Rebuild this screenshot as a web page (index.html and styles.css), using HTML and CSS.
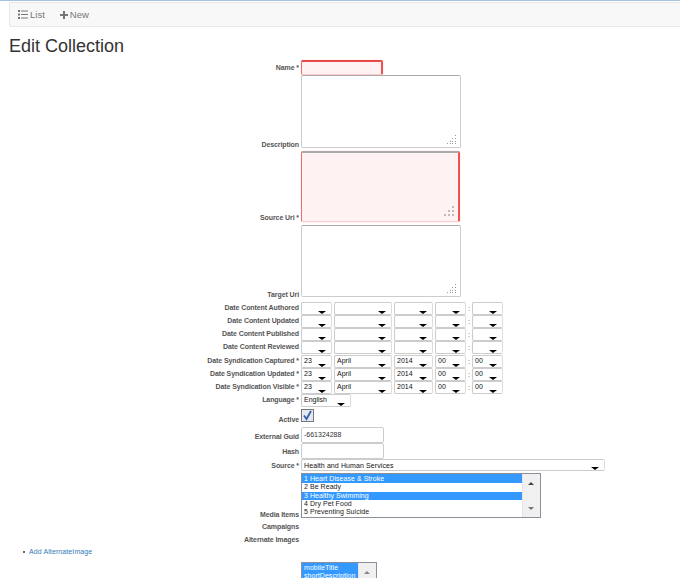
FILE: index.html
```html
<!DOCTYPE html>
<html lang="en">
<head>
    <meta charset="UTF-8">
    <title>Edit Collection</title>
    <link rel="stylesheet" href="styles.css">
</head>
<body>
    <nav class="navbar">
        <a class="nav-link">
            <svg class="nav-icon" width="10" height="9" viewBox="0 0 10 9"><path d="M0 0h2v2H0zM0 3.500h2v2H0zM0 7h2v2H0zM3 .5h7v1H3zM3 4h7v1H3zM3 7.500h7v1H3z" fill="#777"/></svg>
            List
        </a>
        <a class="nav-link">
            <svg class="nav-icon" width="8" height="8" viewBox="0 0 8 8"><path d="M3 0h2v3h3v2H5v3H3V5H0V3h3z" fill="#777"/></svg>
            New
        </a>
    </nav>

    <h1 class="title">Edit Collection</h1>

    <form class="edit-form">
        <div class="row row-name">
            <label>Name *</label>
            <div class="field field-name invalid"></div>
        </div>
        <div class="row row-desc">
            <label>Description</label>
            <div class="area area-desc"><svg class="grip" width="10" height="9" viewBox="0 0 10 9"><path d="M8 0h1v1H8zM5 3h1v1H5zM8 3h1v1H8zM3 6h1v1H3zM5 6h1v1H5zM8 6h1v1H8zM0 8h1v1H0zM3 8h1v1H3zM5 8h1v1H5zM8 8h1v1H8z" fill="#999"/></svg></div>
        </div>
        <div class="row row-source-uri">
            <label>Source Uri *</label>
            <div class="area area-source invalid"><svg class="grip" width="12" height="12" viewBox="0 0 12 12"><path d="M9 0h2v2H9zM5 4h2v2H5zM9 4h2v2H9zM1 8h2v2H1zM5 8h2v2H5zM9 8h2v2H9z" fill="#bbb"/></svg></div>
        </div>
        <div class="row row-target">
            <label>Target Uri</label>
            <div class="area area-target"><svg class="grip" width="10" height="9" viewBox="0 0 10 9"><path d="M8 0h1v1H8zM5 3h1v1H5zM8 3h1v1H8zM3 6h1v1H3zM5 6h1v1H5zM8 6h1v1H8zM0 8h1v1H0zM3 8h1v1H3zM5 8h1v1H5zM8 8h1v1H8z" fill="#999"/></svg></div>
        </div>

        <div class="dates">
            <div class="row row-date">
                <label>Date Content Authored</label>
                <div class="date-group">
                    <span class="sel s-day"></span><span class="sel s-month"></span><span class="sel s-year"></span><span class="sel s-time"></span><span class="colon">:</span><span class="sel s-time"></span>
                </div>
            </div>
            <div class="row row-date">
                <label>Date Content Updated</label>
                <div class="date-group">
                    <span class="sel s-day"></span><span class="sel s-month"></span><span class="sel s-year"></span><span class="sel s-time"></span><span class="colon">:</span><span class="sel s-time"></span>
                </div>
            </div>
            <div class="row row-date">
                <label>Date Content Published</label>
                <div class="date-group">
                    <span class="sel s-day"></span><span class="sel s-month"></span><span class="sel s-year"></span><span class="sel s-time"></span><span class="colon">:</span><span class="sel s-time"></span>
                </div>
            </div>
            <div class="row row-date row-date-last">
                <label>Date Content Reviewed</label>
                <div class="date-group">
                    <span class="sel s-day"></span><span class="sel s-month"></span><span class="sel s-year"></span><span class="sel s-time"></span><span class="colon">:</span><span class="sel s-time"></span>
                </div>
            </div>
            <div class="row row-date">
                <label>Date Syndication Captured *</label>
                <div class="date-group">
                    <span class="sel s-day">23</span><span class="sel s-month">April</span><span class="sel s-year">2014</span><span class="sel s-time">00</span><span class="colon">:</span><span class="sel s-time">00</span>
                </div>
            </div>
            <div class="row row-date">
                <label>Date Syndication Updated *</label>
                <div class="date-group">
                    <span class="sel s-day">23</span><span class="sel s-month">April</span><span class="sel s-year">2014</span><span class="sel s-time">00</span><span class="colon">:</span><span class="sel s-time">00</span>
                </div>
            </div>
            <div class="row row-date">
                <label>Date Syndication Visible *</label>
                <div class="date-group">
                    <span class="sel s-day">23</span><span class="sel s-month">April</span><span class="sel s-year">2014</span><span class="sel s-time">00</span><span class="colon">:</span><span class="sel s-time">00</span>
                </div>
            </div>
            <div class="row row-date">
                <label>Language *</label>
                <div class="date-group"><span class="sel s-lang">English</span></div>
            </div>
        </div>

        <div class="row row-active">
            <label>Active</label>
            <span class="check"><svg width="11" height="11" viewBox="0 0 11 11"><path d="M2 5.500l2.500 3.500L9 1" fill="none" stroke="#3b5ea8" stroke-width="1.800"/></svg></span>
        </div>
        <div class="row row-guid">
            <label>External Guid</label>
            <div class="field field-text">-661324288</div>
        </div>
        <div class="row row-hash">
            <label>Hash</label>
            <div class="field field-text"></div>
        </div>
        <div class="row row-src">
            <label>Source *</label>
            <span class="sel s-source">Health and Human Services</span>
        </div>
        <div class="row row-media">
            <label>Media Items</label>
            <div class="listbox listbox-media">
                <ul class="options">
                    <li class="on">1 Heart Disease &amp; Stroke</li>
                    <li>2 Be Ready</li>
                    <li class="on">3 Healthy Swimming</li>
                    <li>4 Dry Pet Food</li>
                    <li>5 Preventing Suicide</li>
                </ul>
                <div class="scroll"><i class="up"></i><i class="down"></i></div>
            </div>
        </div>
        <div class="row row-plain row-campaigns"><label>Campaigns</label></div>
        <div class="row row-plain"><label>Alternate Images</label></div>

        <ul class="add-list">
            <li><a>Add AlternateImage</a></li>
        </ul>

        <div class="row row-props">
            <label></label>
            <div class="listbox listbox-props">
                <ul class="options">
                    <li class="on">mobileTitle</li>
                    <li class="on">shortDescription</li>
                    <li class="on">longDescription</li>
                </ul>
                <div class="scroll"><i class="up"></i></div>
            </div>
        </div>
    </form>
</body>
</html>
```

FILE: styles.css
```css
html {
    overflow: hidden;
}

body {
    margin: 0;
    border-top: 1px solid #a9c2dd;
    background-color: #fff;
    color: #333;
    font-family: "Liberation Sans", Arial, sans-serif;
    font-size: 7px;
}

.navbar {
    display: flex;
    align-items: center;
    gap: 15px;
    height: 23px;
    margin: 1px 0 0 9px;
    padding-left: 8px;
    background-color: #f8f8f8;
    border: 1px solid #e7e7e7;
    border-right: none;
    border-radius: 2px 0 0 2px;
}

.nav-link {
    display: flex;
    align-items: center;
    gap: 2px;
    color: #777;
    font-size: 9.500px;
}

.title {
    margin: 9px 0 0 9px;
    font-size: 18px;
    font-weight: normal;
    line-height: 21px;
    color: #333;
}

.edit-form {
    margin-top: 3px;
}

.row {
    display: grid;
    grid-template-columns: 299px auto;
    column-gap: 2px;
    justify-content: start;
    align-items: end;
}

.row label {
    text-align: right;
    font-weight: bold;
    color: #555;
    line-height: 9px;
    letter-spacing: -0.09px;
    padding-bottom: 1px;
}

.row-name label {
    margin-bottom: 2px;
}

.row-desc label {
    margin-bottom: -2px;
}

.row-source-uri label {
    margin-bottom: -1px;
}

.row-target label {
    margin-bottom: -3px;
}

.row-active label {
    margin-bottom: -3px;
}

.row-guid label {
    margin-bottom: 1px;
}

.row-hash label {
    margin-bottom: 2px;
}

.row-media label {
    margin-bottom: -2px;
}

.field,
.area,
.sel {
    box-sizing: border-box;
    background-color: #fff;
    border: 1px solid #ccc;
    border-radius: 2px;
}

.field {
    height: 16px;
    line-height: 14px;
}

.field-name {
    width: 82px;
    height: 15px;
}

.field-text {
    width: 83px;
    padding-left: 2px;
    color: #333;
}

.invalid {
    background-color: #fff2f2;
    border: 1px solid #fcc;
    border-top: 2px solid #e64a4a;
    border-right: 2px solid #f05050;
    border-left: 1px solid #e27070;
    box-shadow: 0 0 1px #f99;
}

.area {
    position: relative;
    width: 160px;
    border-top-color: #aaa;
}

.area-desc {
    height: 73px;
}

.area-source {
    height: 71px;
    width: 159px;
}

.area-target {
    height: 72px;
}

.row-source-uri {
    margin-top: 3px;
}

.row-target {
    margin-top: 3px;
}

.grip {
    position: absolute;
    right: 3px;
    bottom: 3px;
}

.dates {
    margin-top: 5px;
}

.row-date {
    height: 13px;
    align-items: center;
}

.row-date label {
    padding-bottom: 3px;
}

.row-date-last {
    margin-bottom: 1px;
}

.date-group {
    display: flex;
    align-items: center;
    gap: 2px;
}

.sel {
    position: relative;
    display: block;
    height: 13px;
    padding-left: 2px;
    border-color: #ccc #ddd #ccc #ccc;
    color: #111;
    line-height: 9px;
    overflow: hidden;
}

.sel::after {
    content: "";
    position: absolute;
    right: 5px;
    bottom: 0;
    border-left: 4px solid transparent;
    border-right: 4px solid transparent;
    border-top: 3px solid #000;
}

.s-day {
    width: 31px;
}

.s-month {
    width: 58px;
}

.s-year {
    width: 39px;
}

.s-time {
    width: 31px;
}

.s-lang {
    width: 50px;
}

.s-source {
    width: 304px;
    height: 12px;
    padding-left: 2px;
    line-height: 11px;
    letter-spacing: 0.1px;
}

.colon {
    width: 2px;
    text-align: center;
    color: #555;
}

.row-active {
    margin-top: 2px;
}

.check {
    display: flex;
    box-sizing: border-box;
    width: 13px;
    height: 13px;
    align-items: center;
    justify-content: center;
    background-color: #e4e8f2;
    border: 1px solid #777;
}

.row-guid {
    margin-top: 5px;
}

.row-media {
    margin-top: 2px;
}

.listbox {
    display: flex;
    box-sizing: border-box;
    border: 1px solid #8a8f99;
    background-color: #fff;
    overflow: hidden;
}

.listbox-media {
    width: 240px;
    height: 45px;
}

.listbox-props {
    width: 76px;
    height: 40px;
}

.options {
    flex: 1;
    margin: 0;
    padding: 0;
    list-style: none;
    color: #222;
    line-height: 8px;
}

.options li {
    box-sizing: border-box;
    padding-left: 2px;
    height: 8.300px;
    letter-spacing: 0.05px;
}

.options li:first-child {
    height: 9.300px;
    padding-top: 1px;
}

.options li.on {
    background-color: #3399ff;
    color: #fff;
}

.scroll {
    position: relative;
    flex: none;
    width: 17px;
    background-color: #f0f0f0;
    border-left: 1px solid #e4e4e4;
}

.up,
.down {
    position: absolute;
    left: 4.500px;
    border-left: 3.500px solid transparent;
    border-right: 3.500px solid transparent;
}

.up {
    top: 8px;
    border-bottom: 3px solid #444;
}

.listbox-props .up {
    border-bottom-color: #888;
}

.down {
    bottom: 7px;
    border-top: 3px solid #777;
}

.row-plain {
    height: 13px;
    align-items: center;
}

.row-campaigns {
    margin-top: 2px;
}

.add-list {
    display: block;
    margin: 1px 0 0 0;
    padding: 0 0 0 23px;
    list-style: none;
    line-height: 9px;
}

.add-list li {
    display: flex;
    align-items: center;
    gap: 4px;
}

.add-list li::before {
    content: "";
    width: 2px;
    height: 2px;
    border-radius: 50%;
    background-color: #333;
}

.add-list a {
    color: #337ab7;
    letter-spacing: 0.1px;
}

.row-props {
    margin-top: 6px;
}
```
